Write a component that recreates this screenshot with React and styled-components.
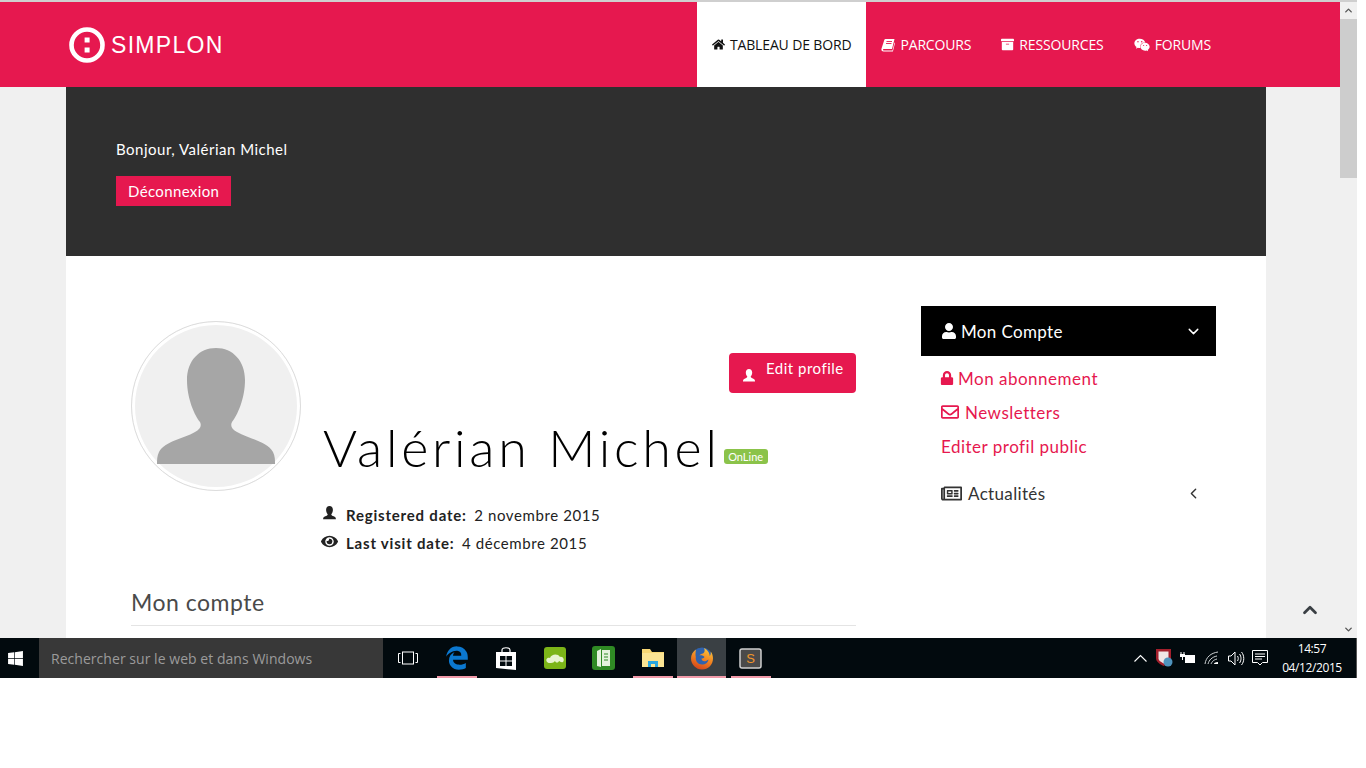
import React from 'react'
import styled, { createGlobalStyle } from 'styled-components'
import {
  FaHome, FaArchive, FaWeixin, FaUser, FaLock, FaRegEnvelope, FaRegNewspaper, FaEye, FaWindows,
} from 'react-icons/fa'
import { FaEdgeLegacy } from 'react-icons/fa6'
import { ChevronDown, ChevronLeft, ChevronUp } from 'lucide-react'

const PINK = '#e6184f'

const Global = createGlobalStyle`
  html, body { margin: 0; padding: 0; background: #fff; overflow: hidden; }
  * { box-sizing: border-box; }
  body { font-family: Lato, "Noto Sans", sans-serif; }
`

const BustIcon = ({ size = 16 }) => (
  <svg width={size} height={size} viewBox="0 0 16 16" fill="currentColor">
    <path d="M8 1c2 0 3.2 1.5 3.2 3.6 0 1.8-.8 3.2-1.5 4 0 .9.5 1.2 1.6 1.7 1.5.6 2.7 1 2.7 2.7v.5H2v-.5c0-1.7 1.2-2.1 2.7-2.7 1.1-.5 1.6-.8 1.6-1.7-.7-.8-1.5-2.2-1.5-4C4.8 2.5 6 1 8 1z" />
  </svg>
)

// the slanted book of the old icon font
const SlantedBook = () => (
  <svg width="14" height="14" viewBox="0 0 14 14" fill="currentColor">
    <path d="M4.5 1H13.5L11 11H2.8c-.6 0-.8.5-.7 1 .1.4.4.6.8.6h8.6l2-8 .5.4-2.1 8.6H2.6C1.3 13.6.3 12.6.4 11.3.5 10.9.6 10.5.7 10.1L3.3 1.9C3.5 1.3 3.9 1 4.5 1z" />
    <path d="M5.5 3.5H11M5 5.5h5.5" stroke="#e6184f" strokeWidth=".9" />
  </svg>
)

const Logo = () => (
  <svg width="38" height="38" viewBox="0 0 38 38">
    <circle cx="19" cy="19" r="15.5" fill="none" stroke="#fff" strokeWidth="4.6" />
    <rect x="16.6" y="11.5" width="5" height="5" fill="#fff" />
    <rect x="16.6" y="21.5" width="5" height="5" fill="#fff" />
  </svg>
)

const Silhouette = () => (
  <svg width="118" height="118" viewBox="0 0 118 118">
    <path fill="#a6a6a6" d="M59 0c17 0 29 13 29 32 0 19-8 36-13 42-2 4 0 7 5 10 12 7 30 9 36 20 2 4 2 8 2 12H0c0-4 0-8 2-12 6-11 24-13 36-20 5-3 7-6 5-10-5-6-13-23-13-42C30 13 42 0 59 0z" />
  </svg>
)

const TaskView = () => (
  <svg width="20" height="14" viewBox="0 0 20 14" fill="none" stroke="#fff" strokeWidth="1">
    <rect x="4.5" y="1" width="11" height="12" />
    <path d="M2.5 2.5H.5v9h2M17.5 2.5h2v9h-2" />
  </svg>
)

const Store = () => (
  <svg width="22" height="25" viewBox="0 0 22 25">
    <path d="M7 6V4c0-3 8-3 8 0v2" fill="none" stroke="#fff" strokeWidth="1.2" />
    <path d="M1 6h20v18L1 22z" fill="#fff" />
    <path d="M5 10h5.5v4.500H5zM11.500 10H17v4.500h-5.500zM5 15.500h5.500V20H5zM11.500 15.500H17V20h-5.500z" fill="#020a0e" />
  </svg>
)

const CloudApp = () => (
  <svg width="22" height="22" viewBox="0 0 22 22">
    <rect width="22" height="22" rx="3" fill="#7cb518" />
    <path d="M3 15c-2-3 1-5 3-4 1-4 8-5 10-1 3-1 5 3 3 5-2 1-3-1-4-1-1 2-3 2-4 0-1 1-2 2-4 2-2 0-3 0-4-1z" fill="#e8f4d0" />
  </svg>
)

const GreenBook = () => (
  <svg width="23" height="24" viewBox="0 0 23 24">
    <rect width="23" height="24" rx="3" fill="#2f8a24" />
    <path d="M5 5l4-2v18l-4-1zM10 4h8v16h-8z" fill="#e3f2dc" />
    <path d="M12 8h4M12 11h4M12 14h4" stroke="#2f8a24" strokeWidth="1.2" />
  </svg>
)

const Folder = () => (
  <svg width="22" height="20" viewBox="0 0 22 20">
    <path d="M0 1h8l2 3h12v15H0z" fill="#f7d774" />
    <path d="M0 5h22v14H0z" fill="#fbe493" />
    <path d="M6 19v-6h10v6h-3v-3H9v3z" fill="#2aa7e0" />
  </svg>
)

const Firefox = () => (
  <svg width="24" height="24" viewBox="0 0 24 24">
    <defs>
      <linearGradient id="fx" x1="0.7" y1="0" x2="0.3" y2="1">
        <stop offset="0%" stopColor="#f9c53b" />
        <stop offset="55%" stopColor="#ef7d1f" />
        <stop offset="100%" stopColor="#d2421c" />
      </linearGradient>
    </defs>
    <circle cx="12" cy="12" r="10.5" fill="#2f62ad" />
    <path fill="url(#fx)" d="M6 3.5C3 5.5 1 8.5 1 12.5 1 18.5 6 23.5 12 23.5c6 0 11-4.5 11-11 0-2.5-.7-5-2.300-7 .3 2-.2 3.500-1 4.500 0-3-2.200-6.500-5.700-8 1.200 2.500.7 4.500-1 5.500-1.500.2-3 1-3.500 2 1.500-.4 4 0 5 1.500-.5 1-2 1.500-3 1.500 0 2 2 3.500 4.500 2.500 1-.4 1.800-1 2.500-1.500-.5 3-3 5-6.500 5-4 0-6.800-3.500-6.200-7.500C5.300 8.500 5.500 6 6 3.500z" />
  </svg>
)

const Sublime = () => (
  <svg width="23" height="23" viewBox="0 0 23 23">
    <rect x="1" y="2" width="21" height="19" rx="2" fill="#4a4a4a" stroke="#cfcfcf" strokeWidth="1.5" />
    <text x="11.5" y="16" fontSize="13" fontFamily="Liberation Sans, sans-serif" fill="#f0952a" textAnchor="middle">S</text>
  </svg>
)

const ChevronTray = () => (
  <svg width="13" height="8" viewBox="0 0 13 8" fill="none" stroke="#fff" strokeWidth="1.1"><path d="M.5 7.5l6-6 6 6" /></svg>
)

const Shield = () => (
  <svg width="17" height="18" viewBox="0 0 17 18">
    <path d="M0 0h15v9c0 4-4 6-7.5 8C4 15 0 13 0 9z" fill="#a31f2c" />
    <path d="M2.5 2.5h10v7c0 2-2.500 3.500-5 5-2.500-1.500-5-3-5-5z" fill="#f0e6e6" />
    <circle cx="12" cy="13" r="4.5" fill="#4f93bd" />
  </svg>
)

const Battery = () => (
  <svg width="16" height="12" viewBox="0 0 16 12" fill="#fff">
    <path d="M1 0v2M4 0v2" stroke="#fff" />
    <path d="M0 2h5v3H3v3H2V5H0z" />
    <rect x="5" y="3" width="10" height="8" />
  </svg>
)

const Wifi = () => (
  <svg width="16" height="14" viewBox="0 0 16 14" fill="none" stroke="#cfd3d5" strokeWidth="1">
    <path d="M1 13C2 6 7 2 14 1M4 13c1-4 4-7 9-8M7 13c1-2 2-4 6-5" />
    <path d="M10 13c0-1 1-2 4-2v2z" fill="#fff" stroke="none" />
  </svg>
)

const Volume = () => (
  <svg width="17" height="15" viewBox="0 0 17 15" fill="none" stroke="#fff" strokeWidth="1">
    <path d="M.5 5H3l4-4v13l-4-4H.5zM9.5 5c1 1.500 1 3.500 0 5M11.5 3c2 2.500 2 6.500 0 9M13.5 1c3 3.500 3 9.500 0 13" />
  </svg>
)

const Notify = () => (
  <svg width="16" height="16" viewBox="0 0 16 16" fill="none" stroke="#fff" strokeWidth="1">
    <path d="M.5.5h15v12h-5L8 15l-2.500-2.500h-5zM3 4h10M3 6.500h10M3 9h7" />
  </svg>
)

const NAV = [
  { label: 'TABLEAU DE BORD', icon: <FaHome size={13} />, active: true },
  { label: 'PARCOURS', icon: <SlantedBook /> },
  { label: 'RESSOURCES', icon: <FaArchive size={13} /> },
  { label: 'FORUMS', icon: <FaWeixin size={16} /> },
]

const TASKS = [
  { icon: <TaskView /> },
  { icon: <FaEdgeLegacy color="#0b78d0" size={24} />, open: true },
  { icon: <Store /> },
  { icon: <CloudApp /> },
  { icon: <GreenBook /> },
  { icon: <Folder />, open: true },
  { icon: <Firefox />, open: true, active: true },
  { icon: <Sublime />, open: true },
]

const App = () => (
  <>
    <Global />
    <Screen>
      <Browser>
        <Page>
          <Header>
            <Brand><Logo /><BrandName>SIMPLON</BrandName></Brand>
            <Nav>
              {NAV.map((n) => (
                <NavItem key={n.label} $active={n.active}>{n.icon}{n.label}</NavItem>
              ))}
            </Nav>
          </Header>
          <Sheet>
            <Banner>
              <Hello>Bonjour, Valérian Michel</Hello>
              <Logout>Déconnexion</Logout>
            </Banner>
            <Body>
              <Main>
                <Profile>
                  <Avatar><Silhouette /></Avatar>
                  <Info>
                    <EditRow><EditButton><BustIcon /><span>Edit profile</span></EditButton></EditRow>
                    <NameRow><Name>Valérian Michel</Name><Badge>OnLine</Badge></NameRow>
                    <Meta>
                      <MetaRow><BustIcon size={17} /><b>Registered date:</b>2 novembre 2015</MetaRow>
                      <MetaRow><FaEye size={17} /><b>Last visit date:</b>4 décembre 2015</MetaRow>
                    </Meta>
                  </Info>
                </Profile>
                <SectionTitle>Mon compte</SectionTitle>
              </Main>
              <Side>
                <SideHead><FaUser size={16} /><span>Mon Compte</span><ChevronDown size={17} strokeWidth={2} /></SideHead>
                <SideLinks>
                  <SideLink><LockIcon size={14} />Mon abonnement</SideLink>
                  <SideLink><FaRegEnvelope size={18} />Newsletters</SideLink>
                  <SideLink>Editer profil public</SideLink>
                </SideLinks>
                <SideItem><FaRegNewspaper size={21} /><span>Actualités</span><ChevronLeft size={17} strokeWidth={2} /></SideItem>
              </Side>
            </Body>
          </Sheet>
          <BackTop><ChevronUp size={22} strokeWidth={3} /></BackTop>
        </Page>
        <Scrollbar>
          <ChevronUp size={11} strokeWidth={3} />
          <Thumb />
          <ChevronDown size={11} strokeWidth={3} />
        </Scrollbar>
      </Browser>
      <Taskbar>
        <StartButton><FaWindows size={17} /></StartButton>
        <Search>Rechercher sur le web et dans Windows</Search>
        {TASKS.map((t, i) => (
          <TaskItem key={i} $open={t.open} $active={t.active}>{t.icon}</TaskItem>
        ))}
        <Tray>
          <TrayIcon><ChevronTray /></TrayIcon>
          <TrayIcon><Shield /></TrayIcon>
          <TrayIcon><Battery /></TrayIcon>
          <TrayIcon><Wifi /></TrayIcon>
          <TrayIcon><Volume /></TrayIcon>
          <TrayIcon><Notify /></TrayIcon>
          <Clock><span>14:57</span><span>04/12/2015</span></Clock>
        </Tray>
      </Taskbar>
    </Screen>
  </>
)

export default App

const Screen = styled.div`
  width: 1366px;
  height: 768px;
  background: #fff;
  overflow: hidden;
`

const Browser = styled.div`
  display: flex;
  width: 1357px;
  height: 638px;
  border-top: 2px solid #cfcfcf;
`

const Page = styled.div`
  position: relative;
  width: 1340px;
  height: 636px;
  background: #f0f0f0;
  overflow: hidden;
`

const Header = styled.header`
  display: flex;
  justify-content: space-between;
  height: 85px;
  padding: 0 114px 0 68px;
  background: ${PINK};
`

const Brand = styled.div`
  display: flex;
  align-items: center;
  gap: 5px;
`

const BrandName = styled.span`
  padding-top: 1px;
  font: 23px "Liberation Sans", Arial, sans-serif;
  letter-spacing: 1.3px;
  color: #fff;
`

const Nav = styled.nav`
  display: flex;
`

const NavItem = styled.a`
  display: flex;
  align-items: center;
  gap: 5px;
  padding: 0 15px;
  font: 14px "Open Sans", sans-serif;
  letter-spacing: -0.15px;
  color: ${(p) => (p.$active ? '#111' : '#fff')};
  background: ${(p) => (p.$active ? '#fff' : 'transparent')};
`

const Sheet = styled.div`
  width: 1200px;
  margin-left: 66px;
  background: #fff;
`

const Banner = styled.section`
  height: 169px;
  padding: 52px 50px 0;
  background: #2f2f2f;
`

const Hello = styled.p`
  margin: 0 0 17px;
  font-size: 15px;
  line-height: 20px;
  letter-spacing: 0.5px;
  color: #fff;
`

const Logout = styled.a`
  display: inline-block;
  height: 30px;
  padding: 0 12px;
  font-size: 15px;
  line-height: 30px;
  letter-spacing: 0.36px;
  color: #fff;
  background: ${PINK};
`

const Body = styled.div`
  display: grid;
  grid-template-columns: 755px 295px;
  column-gap: 50px;
  padding: 50px;
`

const Main = styled.div`
  padding: 15px 15px 0;
`

const Profile = styled.div`
  display: flex;
  gap: 20px;
`

const Avatar = styled.div`
  display: flex;
  flex: none;
  justify-content: center;
  width: 170px;
  height: 170px;
  padding-top: 26px;
  border: 1px solid #ddd;
  border-radius: 50%;
  background: #f0f0f0;
  box-shadow: inset 0 0 0 3px #fff;
`

const Info = styled.div`
  flex: 1;
  padding-top: 32px;
`

const EditRow = styled.div`
  display: flex;
  justify-content: flex-end;
`

const EditButton = styled.a`
  display: flex;
  gap: 9px;
  width: 127px;
  height: 40px;
  padding: 5px 12px;
  border-radius: 4px;
  font-size: 15px;
  line-height: 20px;
  letter-spacing: 0.5px;
  color: #fff;
  background: ${PINK};

  & svg { margin-top: 10px; flex: none; }
`

const NameRow = styled.div`
  display: flex;
  align-items: flex-end;
  gap: 3px;
  margin-top: 22px;
`

const Name = styled.h1`
  margin: 0 0 0 2px;
  font-size: 52px;
  font-weight: 300;
  line-height: 64px;
  letter-spacing: 3.7px;
  color: #000;
`

const Badge = styled.span`
  margin-bottom: 15px;
  padding: 0 4.5px;
  border-radius: 3px;
  font-size: 11px;
  line-height: 15px;
  color: #fff;
  background: #8bc34a;
`

const Meta = styled.div`
  margin-top: 22px;
`

const MetaRow = styled.div`
  display: flex;
  align-items: center;
  gap: 7.5px;
  height: 28px;
  font-size: 15px;
  letter-spacing: 0.6px;
  color: #222;

  & b { letter-spacing: 0.8px; }
  & svg { flex: none; margin-right: .5px; margin-top: -4px; }
`

const SectionTitle = styled.h2`
  margin: 29px 0 0;
  padding-bottom: 7px;
  border-bottom: 1px solid #e4e4e4;
  font-size: 23px;
  font-weight: 400;
  line-height: 32px;
  letter-spacing: 0.5px;
  color: #4a4a4a;
`

const Side = styled.aside`
  color: #333;
`

const SideHead = styled.div`
  display: flex;
  align-items: center;
  gap: 4px;
  height: 50px;
  padding: 0 14px 0 20px;
  font-size: 17px;
  letter-spacing: 0.35px;
  color: #fff;
  background: #000;

  & span { flex: 1; }
`

const SideLinks = styled.div`
  display: flex;
  flex-direction: column;
  padding: 5px 20px 0;
`

const SideLink = styled.a`
  display: flex;
  align-items: center;
  gap: 6px;
  height: 34px;
  font-size: 17px;
  letter-spacing: 0.5px;
  color: ${PINK};
`

const LockIcon = styled(FaLock)`
  margin: 0 -2px 0 -1px;
`

const SideItem = styled.div`
  display: flex;
  align-items: center;
  gap: 6px;
  height: 34px;
  margin-top: 13px;
  padding: 0 14px 0 20px;
  font-size: 17px;
  letter-spacing: 0.35px;
  color: #333;

  & span { flex: 1; }
`

const BackTop = styled.a`
  position: absolute;
  right: 19px;
  top: 597px;
  display: flex;
  color: #3a3f44;
`

const Scrollbar = styled.div`
  display: flex;
  flex-direction: column;
  align-items: center;
  justify-content: space-between;
  width: 17px;
  height: 636px;
  padding: 3px 0;
  color: #555;
  background: #f0f0f0;
`

const Thumb = styled.div`
  align-self: stretch;
  height: 159px;
  margin: 3px 0 auto;
  background: #cdcdcd;
`

const Taskbar = styled.footer`
  display: flex;
  align-items: stretch;
  width: 1357px;
  height: 40px;
  background: #020a0e;
`

const StartButton = styled.div`
  display: flex;
  align-items: center;
  justify-content: center;
  width: 39px;
  color: #fff;
  padding-right: 9px;
`

const Search = styled.div`
  display: flex;
  align-items: center;
  width: 344px;
  padding-left: 12px;
  font: 14px "Open Sans", sans-serif;
  letter-spacing: 0.04px;
  color: #9b9b9b;
  background: #383838;
`

const TaskItem = styled.div`
  position: relative;
  display: flex;
  align-items: center;
  justify-content: center;
  flex: none;
  width: 49px;
  background: ${(p) => (p.$active ? '#3a4044' : 'transparent')};

  &::after {
    content: '';
    display: ${(p) => (p.$open ? 'block' : 'none')};
    position: absolute;
    bottom: 0;
    left: ${(p) => (p.$active ? '0' : '5px')};
    right: ${(p) => (p.$active ? '0' : '4px')};
    height: 2px;
    background: #f19aa9;
  }
`

const Tray = styled.div`
  display: flex;
  align-items: center;
  margin-left: auto;
  padding-right: 7px;
  border-right: 1px solid #555;
`

const TrayIcon = styled.div`
  display: flex;
  justify-content: center;
  width: 24px;
`

const Clock = styled.div`
  display: flex;
  flex-direction: column;
  align-items: center;
  width: 74px;
  margin-left: 3px;
  font: 12px/19px "Open Sans", sans-serif;
  letter-spacing: -0.4px;
  color: #fff;
`
